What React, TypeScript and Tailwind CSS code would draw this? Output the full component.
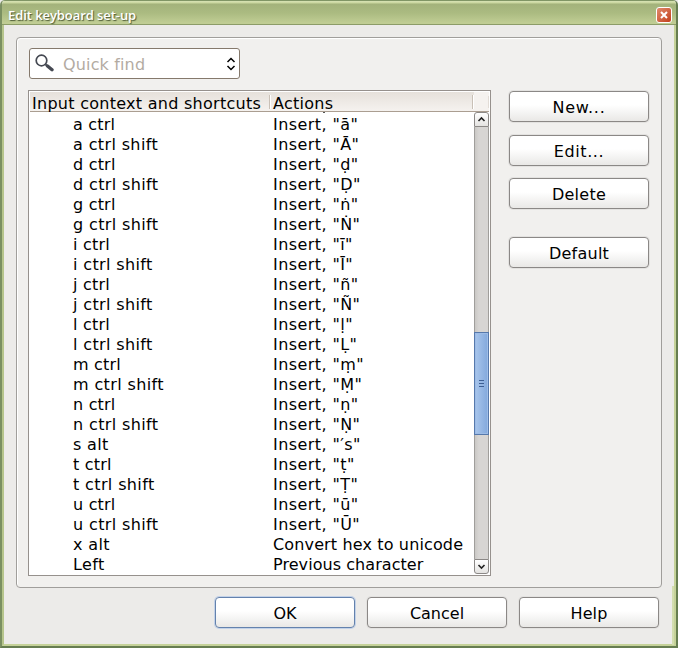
import React from "react";

const rows: [string, string][] = [
  ["a ctrl", 'Insert, "ā"'],
  ["a ctrl shift", 'Insert, "Ā"'],
  ["d ctrl", 'Insert, "ḍ"'],
  ["d ctrl shift", 'Insert, "Ḍ"'],
  ["g ctrl", 'Insert, "ṅ"'],
  ["g ctrl shift", 'Insert, "Ṅ"'],
  ["i ctrl", 'Insert, "ī"'],
  ["i ctrl shift", 'Insert, "Ī"'],
  ["j ctrl", 'Insert, "ñ"'],
  ["j ctrl shift", 'Insert, "Ñ"'],
  ["l ctrl", 'Insert, "ḷ"'],
  ["l ctrl shift", 'Insert, "Ḷ"'],
  ["m ctrl", 'Insert, "ṃ"'],
  ["m ctrl shift", 'Insert, "Ṃ"'],
  ["n ctrl", 'Insert, "ṇ"'],
  ["n ctrl shift", 'Insert, "Ṇ"'],
  ["s alt", 'Insert, "′s"'],
  ["t ctrl", 'Insert, "ṭ"'],
  ["t ctrl shift", 'Insert, "Ṭ"'],
  ["u ctrl", 'Insert, "ū"'],
  ["u ctrl shift", 'Insert, "Ū"'],
  ["x alt", "Convert hex to unicode"],
  ["Left", "Previous character"],
];

function Button({
  label,
  focused = false,
  spacing = "tracking-normal",
}: {
  label: string;
  focused?: boolean;
  spacing?: string;
}) {
  return (
    <button
      className={
        "flex h-[31px] w-[140px] shrink-0 items-center justify-center rounded-[4px] border bg-gradient-to-b from-white from-45% to-[#e9e8e6] pt-[2px] " +
        spacing +
        " " +
        (focused
          ? "border-[#6482ad] shadow-[0_0_0_1px_#c3d2e8]"
          : "border-[#8b8886] shadow-[0_0_0_1px_#e3e2e0]")
      }
    >
      {label}
    </button>
  );
}

function ScrollArrow({ down = false }: { down?: boolean }) {
  return (
    <div
      className={
        "flex h-[15px] w-[15px] shrink-0 items-center justify-center border border-[#8b8886] bg-gradient-to-b from-white to-[#e4e3e1] " +
        (down ? "rounded-b-[3px]" : "rounded-t-[3px]")
      }
    >
      <svg width="9" height="7" viewBox="0 0 9 7" fill="none" stroke="#222" strokeWidth="1.6">
        <path d={down ? "M1.5 2L4.5 5L7.5 2" : "M1.5 5L4.5 2L7.5 5"} />
      </svg>
    </div>
  );
}

export default function App() {
  return (
    <div className="relative flex h-[648px] w-[678px] flex-col overflow-hidden bg-[#ecebe9] font-['DejaVu_Sans',sans-serif] text-[16px] leading-5 text-black">
      <div className="flex h-full flex-col overflow-hidden rounded-t-[5px] border-x-2 border-b-2 border-l-[#7b9062] border-r-[#667d51] border-b-[#667d51] bg-[#ecebe9]">
        <div className="flex h-[25px] shrink-0 items-center justify-between border-t border-b border-t-[#809565] border-b-[#8c9c68] bg-[linear-gradient(to_bottom,#d8e2b5_0px,#c9d59d_2px,#a3b27b_3px,#abbb81_12px,#c0cd94_22px)] pr-[4px] pl-[6px]">
          <span className="mt-[4px] text-[13px] font-semibold leading-4 tracking-[-0.07px] text-white font-['Open_Sans',sans-serif] [text-shadow:1px_1px_1px_#4e5b36]">
            Edit keyboard set-up
          </span>
          <div className="mt-[4px] flex h-[16px] w-[16px] items-center justify-center rounded-[3px] border border-white bg-gradient-to-br from-[#e08a6c] to-[#c23d16]">
            <svg width="8" height="8" viewBox="0 0 8 8" stroke="#fff" strokeWidth="2">
              <path d="M1 1L7 7M7 1L1 7" />
            </svg>
          </div>
        </div>

        <div className="flex min-h-0 grow flex-col border-x-2 border-b-2 border-l-[#b6c58c] border-r-[#c5d299] border-b-[#c5d299] pt-3 pr-3 pl-3">
          <div className="flex h-[551px] w-[646px] shrink-0 rounded-[4px] border border-[#a09e9b] bg-[#f1f0ee] pt-[10px] pl-[11px] shadow-[inset_1px_1px_0_#fff]">
            <div className="flex w-[463px] shrink-0 flex-col">
              <div className="ml-px flex h-[31px] w-[211px] items-center rounded-[3px] border border-[#85796c] bg-white pr-[3px] pl-[5px]">
                <svg width="19" height="18" viewBox="0 0 19 18" fill="none" className="-mt-[2px] shrink-0">
                  <circle cx="6.5" cy="6.5" r="5.3" stroke="#454952" strokeWidth="1.7" />
                  <path d="M10.5 10.5L12.5 12" stroke="#454952" strokeWidth="2" />
                  <path d="M12.5 12L17 15.7" stroke="#454952" strokeWidth="3.4" strokeLinecap="round" />
                </svg>
                <span className="ml-[9px] grow pt-[2px] tracking-[0.15px] text-[#b3aba2]">Quick find</span>
                <svg width="10" height="14" viewBox="0 0 10 14" fill="none" stroke="#000" strokeWidth="1.5">
                  <path d="M1.5 5L5 1.5L8.5 5M1.5 9L5 12.5L8.5 9" />
                </svg>
              </div>

              <div className="mt-[11px] flex h-[486px] w-[463px] flex-col overflow-hidden border border-[#96918d] bg-white">
                <div className="mt-px ml-px flex h-5 w-[459px] shrink-0 items-center border-b border-[#ab9e91] bg-gradient-to-b from-[#e6e1db] to-[#f5f2ef]">
                  <span className="w-[239px] whitespace-nowrap pt-[4px] pl-[2px] tracking-[0.27px]">Input context and shortcuts</span>
                  <div className="h-[14px] w-[2px] border-l border-r border-l-[#c9c0b6] border-r-white" />
                  <span className="w-[201px] pt-[4px] pl-[2px] tracking-[0.27px]">Actions</span>
                  <div className="h-[14px] w-[2px] border-l border-r border-l-[#c9c0b6] border-r-white" />
                  <div className="flex h-full grow items-center justify-end bg-[#f5f2ef]">
                    <div className="h-[12px] w-px bg-[#e2dcd6]" />
                  </div>
                </div>
                <div className="flex min-h-0 grow">
                  <div className="w-[445px] overflow-hidden">
                    <div className="ml-[294px] h-px w-[2px] bg-[#555]" />
                    <div className="pt-[2px]">
                      {rows.map(([keys, action]) => (
                        <div key={keys} className="flex h-5 whitespace-nowrap">
                          <span
                            className={
                              "w-[200px] shrink-0 pl-[44px] " +
                              (keys.endsWith("shift")
                                ? "tracking-[0.37px]"
                                : keys.endsWith("ctrl")
                                  ? "tracking-[0.2px]"
                                  : "tracking-[0.35px]")
                            }
                          >
                            {keys}
                          </span>
                          <span
                            className={
                              "pl-[44px] " +
                              (action.startsWith("Insert")
                                ? "tracking-[0.42px]"
                                : action.startsWith("Convert")
                                  ? "tracking-[0.14px]"
                                  : "tracking-[0.06px]")
                            }
                          >
                            {action}
                          </span>
                        </div>
                      ))}
                    </div>
                  </div>
                  <div className="mb-px flex w-[15px] flex-col">
                    <ScrollArrow />
                    <div className="flex grow flex-col border-x border-[#a09e9b] bg-gradient-to-r from-[#cac8c5] to-[#d7d5d3] to-30% pt-[205px]">
                      <div className="-mx-px flex h-[103px] flex-col items-center justify-center gap-[2px] border border-[#5679ac] bg-gradient-to-r from-[#a9c6ec] to-[#82a8dc] shadow-[inset_0_0_0_1px_#9dbce6]">
                        <div className="h-px w-[5px] bg-[#3d5f94]" />
                        <div className="h-px w-[5px] bg-[#3d5f94]" />
                        <div className="h-px w-[5px] bg-[#3d5f94]" />
                      </div>
                    </div>
                    <ScrollArrow down />
                  </div>
                </div>
              </div>
            </div>

            <div className="ml-[18px] flex flex-col pt-[43px]">
              <Button label="New..." spacing="tracking-[0.7px]" />
              <div className="mt-[13px]">
                <Button label="Edit..." spacing="tracking-[0.6px]" />
              </div>
              <div className="mt-3">
                <Button label="Delete" spacing="tracking-[0.25px]" />
              </div>
              <div className="mt-[28px]">
                <Button label="Default" spacing="tracking-[0.25px]" />
              </div>
            </div>
          </div>

          <div className="mt-[9px] flex gap-3 pl-[199px]">
            <Button label="OK" focused />
            <Button label="Cancel" />
            <Button label="Help" spacing="tracking-[0.1px]" />
          </div>
        </div>
      </div>
      <div className="absolute top-[586px] right-[4px] h-[59px] w-[2px] bg-[#d3ddb0]" />
    </div>
  );
}
